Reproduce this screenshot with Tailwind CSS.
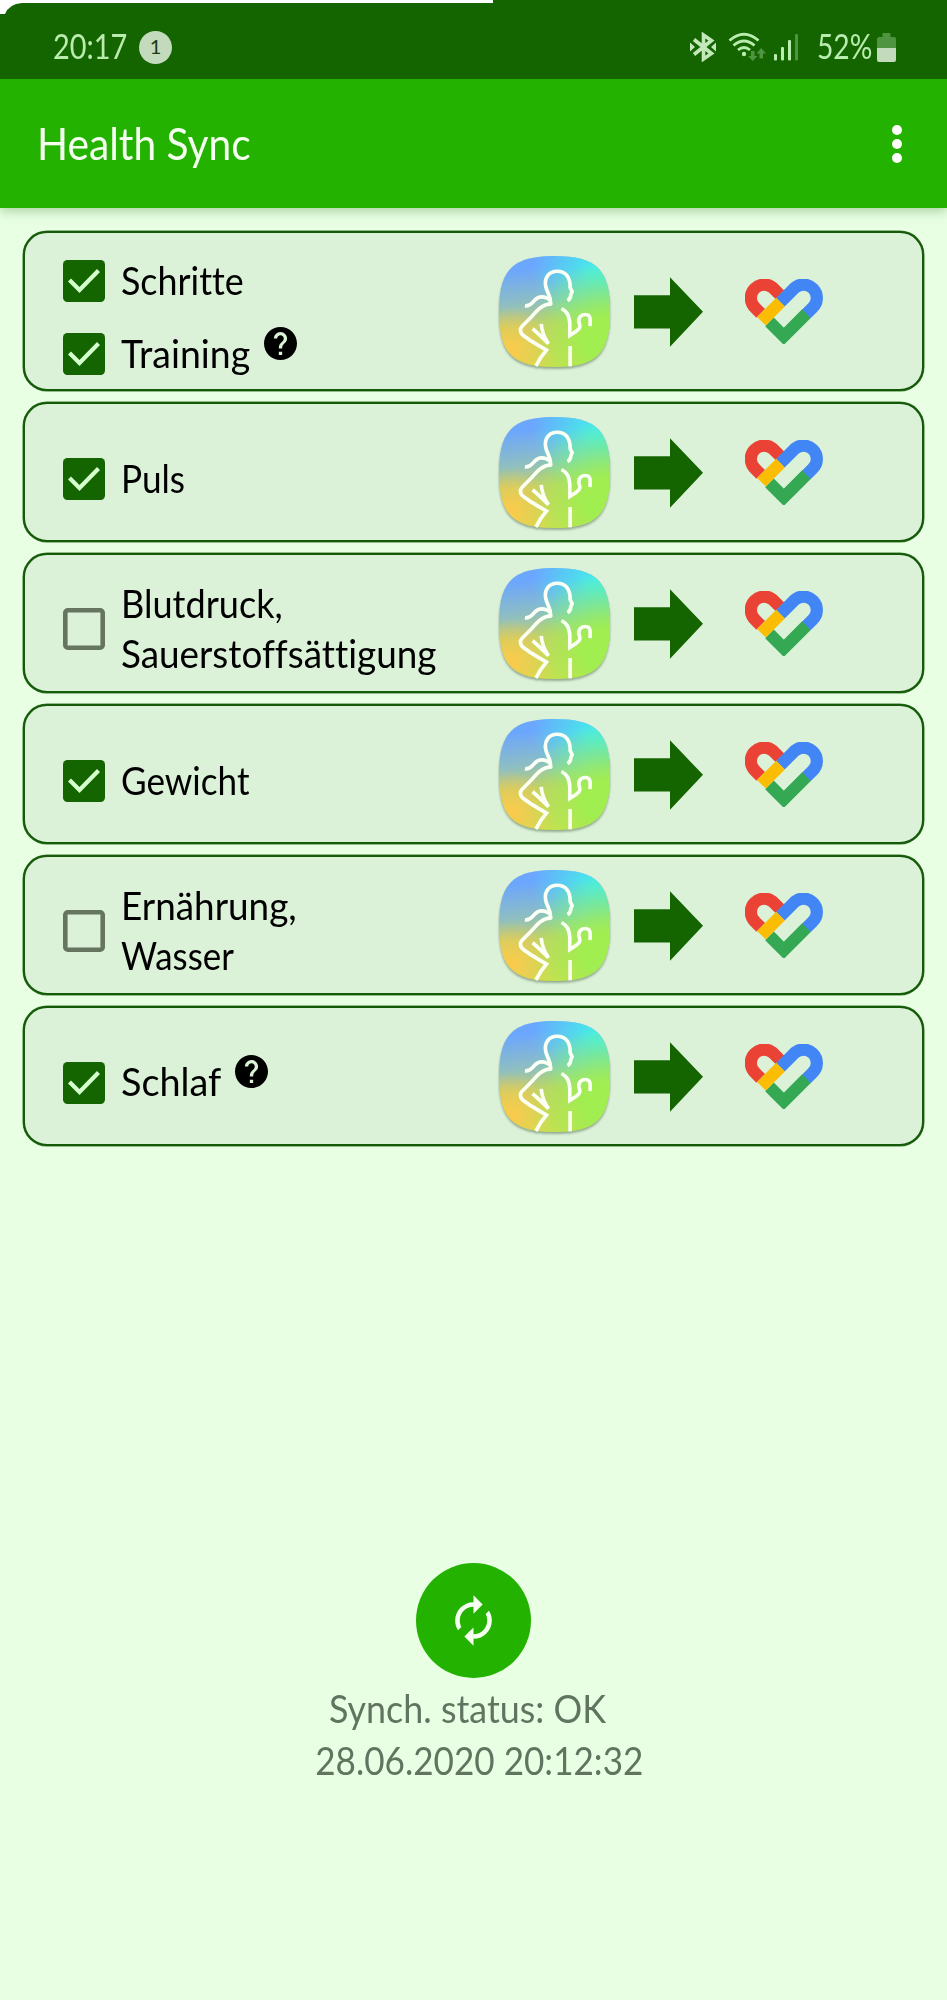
<!DOCTYPE html>
<html lang="de">

<head>
    <meta charset="UTF-8">
    <meta name="viewport" content="width=device-width, initial-scale=1.0">
    <title>Health Sync</title>
    <script src="https://cdn.jsdelivr.net/npm/@tailwindcss/browser@4"></script>
</head>

<body class="bg-[#e9ffe4] font-['Lato',sans-serif] text-[39px] leading-[50px] text-black [font-variant-ligatures:none]">

    <!-- Shared icons -->
    <svg class="absolute w-0 h-0" aria-hidden="true">
        <defs>
            <linearGradient id="gBase" x1="0.3" y1="0" x2="0.4" y2="1">
                <stop offset="0.1" stop-color="#6ba6ff" />
                <stop offset="0.42" stop-color="#8fbfc0" />
                <stop offset="0.62" stop-color="#c3ce6c" />
                <stop offset="1" stop-color="#d3dc50" />
            </linearGradient>
            <radialGradient id="gCyan" cx="0.9" cy="0.14" r="0.6">
                <stop offset="0.1" stop-color="#45ecea" />
                <stop offset="1" stop-color="#45ecea" stop-opacity="0" />
            </radialGradient>
            <radialGradient id="gLime" cx="0.95" cy="0.75" r="0.7">
                <stop offset="0.25" stop-color="#a0ee50" />
                <stop offset="1" stop-color="#a0ee50" stop-opacity="0" />
            </radialGradient>
            <radialGradient id="gGold" cx="0.1" cy="0.85" r="0.38">
                <stop offset="0.1" stop-color="#f8cb4c" />
                <stop offset="1" stop-color="#f8cb4c" stop-opacity="0" />
            </radialGradient>
        </defs>
        <symbol id="shealth" viewBox="57 77 334 334">
            <path fill="url(#gBase)" d="M224 77C350 77 391 118 391 244S350 411 224 411S57 370 57 244S98 77 224 77Z" />
            <path fill="url(#gCyan)" d="M224 77C350 77 391 118 391 244S350 411 224 411S57 370 57 244S98 77 224 77Z" />
            <path fill="url(#gLime)" d="M224 77C350 77 391 118 391 244S350 411 224 411S57 370 57 244S98 77 224 77Z" />
            <path fill="url(#gGold)" d="M224 77C350 77 391 118 391 244S350 411 224 411S57 370 57 244S98 77 224 77Z" />
            <g fill="none" stroke="#fbfff4" stroke-width="11">
                <path d="M263 211Q273 206 273 194L277 184L271 172C272 142 258 123 232 123C206 123 194 143 197 165C199 185 213 192 213 224" />
                <path d="M135 227C160 231 158 202 184 200C195 199 205 205 213 211" />
                <path d="M216 221C185 221 170 243 155 260L126 289Q117 300 126 312C140 326 172 344 200 360L183 382L168 408" />
                <path d="M245 235C262 244 268 255 270 280V316L290 303C303 294 302 287 297 275C296 260 307 252 318 253C333 254 332 266 331 288" />
                <path d="M184 281C186 305 195 325 206 341C190 325 175 310 158 296" />
                <path d="M271 348V409" />
            </g>
        </symbol>
        <symbol id="arrow" viewBox="42 141 207 209">
            <path fill="#146500" d="M42 195H150V141L249 245L150 350V295H42Z" />
        </symbol>
        <symbol id="gfit" viewBox="374 146 235 197">
            <g fill="none" stroke-width="37">
                <path stroke="#ea4335" d="M421 250.2L404.4 233.6A40.5 40.5 0 1 1 461.6 176.4L479 193.8" />
                <path stroke="#4285f4" d="M480.5 216.3L520.4 176.4A40.5 40.5 0 1 1 577.6 233.6L559 252.2" />
                <path stroke="#34a853" d="M447.5 276L491 319.5L559.5 251" />
                <path stroke="#fbbc04" d="M423 274L481 216" />
            </g>
        </symbol>
        <symbol id="checked" viewBox="0 0 42 42">
            <rect width="42" height="42" rx="4.5" fill="#146500" />
            <path d="M6.5 20L16.5 30L35.5 10.5" fill="none" stroke="#d5ffcc" stroke-width="4.2" />
        </symbol>
        <symbol id="unchecked" viewBox="0 0 42 42">
            <rect x="2.3" y="2.3" width="37.4" height="37.4" rx="2.5" fill="none" stroke="#65755f" stroke-width="4.6" />
        </symbol>
        <symbol id="help" viewBox="2 2 20 20">
            <path d="M12 2C6.48 2 2 6.48 2 12s4.48 10 10 10 10-4.48 10-10S17.52 2 12 2zm1 17h-2v-2h2v2zm2.07-7.75l-.9.92C13.45 12.9 13 13.5 13 15h-2v-.5c0-1.1.45-2.1 1.17-2.83l1.24-1.26c.37-.36.59-.86.59-1.41 0-1.1-.9-2-2-2s-2 .9-2 2H8c0-2.21 1.79-4 4-4s4 1.79 4 4c0 .88-.36 1.68-.93 2.25z" />
        </symbol>
    </svg>

    <!-- Status bar -->
    <div class="relative h-[79px] bg-[#146500] pl-[53px] pr-[51px] pt-[15px] flex items-center justify-between text-[34px] text-[#b9ecae]">
        <svg class="absolute left-0 top-0" width="493" height="14" viewBox="0 0 493 14">
            <path fill="#fff" d="M0 0H493V3H22Q9 4 5 14H0Z" />
        </svg>
        <div class="flex items-center">
            <div class="w-[86px] pb-[2px]"><span class="inline-block origin-left whitespace-nowrap scale-x-[0.85]">20:17</span></div>
            <span class="size-[33px] rounded-full bg-[#c3dabd] text-[#1c3a14] text-[20px] leading-[31px] text-center">1</span>
        </div>
        <div class="flex items-center">
            <svg width="26" height="30" viewBox="0 0 26 30" fill="none" stroke="#c3e8ba" stroke-width="3.6">
                <path d="M4 7.5L21.5 21.5L13.5 27V3L21.5 8.5L4 22.5" />
                <path d="M0 10.5L5 15L0 19.5ZM26 10.5L21 15L26 19.5Z" fill="#c3e8ba" stroke="none" />
            </svg>
            <svg class="ml-[12px]" width="38" height="30" viewBox="0 0 38 30" fill="none" stroke="#b9ecae" stroke-width="2.8">
                <path d="M1.5 8.5Q16 -4 30.5 8.5M5.5 13.5Q16 4.5 26.5 13.5M10 18Q16 13 22 18" />
                <circle cx="16" cy="22" r="2.2" fill="#b9ecae" stroke="none" />
                <g fill="#4f9440" stroke="none">
                    <path d="M23 19h3.5v5h3L24.7 29L20 24h3Z" />
                    <path d="M31.5 26.5h3.5v-5h3L33.2 16L28.5 21.5h3Z" />
                </g>
            </svg>
            <svg class="ml-[8px]" width="25" height="28" viewBox="0 0 25 28" fill="#b9ecae">
                <rect x="0" y="21" width="3" height="6.5" rx="1" />
                <rect x="7" y="14" width="3" height="13.5" rx="1" />
                <rect x="14" y="7" width="3" height="20.5" rx="1" />
                <rect x="21" y="1" width="3" height="26.5" rx="1" fill="#4f9440" />
            </svg>
            <div class="ml-[18px] w-[60px] pb-[2px]"><span class="inline-block origin-left whitespace-nowrap scale-x-[0.83]">52%</span></div>
            <svg width="19" height="29" viewBox="0 0 19 29">
                <path fill="#4f9440" d="M5.5 0H13.5V4H17Q19 4 19 6V16H0V6Q0 4 2 4H5.5Z" />
                <path fill="#c3dabd" d="M0 15H19V27Q19 29 17 29H2Q0 29 0 27Z" />
            </svg>
        </div>
    </div>

    <!-- App bar -->
    <header class="h-[129px] bg-[#24b200] pl-[37px] pr-[45px] flex items-center justify-between shadow-[0_2px_12px_rgba(20,101,0,0.35)]">
        <h1 class="text-[45px] leading-[56px] text-[#f4fff0] pb-[2px]"><span class="inline-block origin-left whitespace-nowrap scale-x-[0.905]">Health Sync</span></h1>
        <button class="flex flex-col gap-[4px]" aria-label="Menü">
            <span class="size-[10px] rounded-full bg-white"></span>
            <span class="size-[10px] rounded-full bg-white"></span>
            <span class="size-[10px] rounded-full bg-white"></span>
        </button>
    </header>

    <main class="px-[23px] pt-[23px] flex flex-col gap-[11px]">

        <section class="h-[160px] rounded-[24px] border-2 border-[#145a08] shadow-[0_0_0_0.5px_#3c7a32] bg-[#dbf1d8] flex items-center">
            <div class="w-[474px] pl-[38px] pt-[13px] flex flex-col gap-[23px]">
                <div class="h-[50px] flex items-center">
                    <svg class="size-[42px] mr-[16px]"><use href="#checked" /></svg>
                    <div class="pb-[3px]"><span class="inline-block origin-left whitespace-nowrap scale-x-[0.92]">Schritte</span></div>
                </div>
                <div class="h-[50px] flex items-center">
                    <svg class="size-[42px] mr-[16px]"><use href="#checked" /></svg>
                    <div class="w-[143px] pb-[3px]"><span class="inline-block origin-left whitespace-nowrap scale-x-[0.96]">Training</span></div>
                    <svg class="size-[33px] mb-[22px]"><use href="#help" /></svg>
                </div>
            </div>
            <svg class="size-[111px] drop-shadow-[0_2px_1px_rgba(60,90,60,0.45)]"><use href="#shealth" /></svg>
            <svg class="w-[69px] h-[70px] ml-[24px] mt-[1px]"><use href="#arrow" /></svg>
            <svg class="w-[78px] h-[65px] ml-[42px]"><use href="#gfit" /></svg>
        </section>

        <section class="h-[140px] rounded-[24px] border-2 border-[#145a08] shadow-[0_0_0_0.5px_#3c7a32] bg-[#dbf1d8] flex items-center">
            <div class="w-[474px] pl-[38px] pt-[14px] flex items-center">
                <svg class="size-[42px] mr-[16px]"><use href="#checked" /></svg>
                <div class="pb-[3px]"><span class="inline-block origin-left whitespace-nowrap scale-x-[0.9]">Puls</span></div>
            </div>
            <svg class="size-[111px] drop-shadow-[0_2px_1px_rgba(60,90,60,0.45)]"><use href="#shealth" /></svg>
            <svg class="w-[69px] h-[70px] ml-[24px] mt-[1px]"><use href="#arrow" /></svg>
            <svg class="w-[78px] h-[65px] ml-[42px]"><use href="#gfit" /></svg>
        </section>

        <section class="h-[140px] rounded-[24px] border-2 border-[#145a08] shadow-[0_0_0_0.5px_#3c7a32] bg-[#dbf1d8] flex items-center">
            <div class="w-[474px] pl-[38px] pt-[12px] flex items-center">
                <svg class="size-[42px] mr-[16px]"><use href="#unchecked" /></svg>
                <div class="pb-[3px] flex flex-col items-start">
                    <span class="inline-block origin-left whitespace-nowrap scale-x-[0.925]">Blutdruck,</span>
                    <span class="inline-block origin-left whitespace-nowrap scale-x-[0.945]">Sauerstoffsättigung</span>
                </div>
            </div>
            <svg class="size-[111px] drop-shadow-[0_2px_1px_rgba(60,90,60,0.45)]"><use href="#shealth" /></svg>
            <svg class="w-[69px] h-[70px] ml-[24px] mt-[1px]"><use href="#arrow" /></svg>
            <svg class="w-[78px] h-[65px] ml-[42px]"><use href="#gfit" /></svg>
        </section>

        <section class="h-[140px] rounded-[24px] border-2 border-[#145a08] shadow-[0_0_0_0.5px_#3c7a32] bg-[#dbf1d8] flex items-center">
            <div class="w-[474px] pl-[38px] pt-[14px] flex items-center">
                <svg class="size-[42px] mr-[16px]"><use href="#checked" /></svg>
                <div class="pb-[3px]"><span class="inline-block origin-left whitespace-nowrap scale-x-[0.9]">Gewicht</span></div>
            </div>
            <svg class="size-[111px] drop-shadow-[0_2px_1px_rgba(60,90,60,0.45)]"><use href="#shealth" /></svg>
            <svg class="w-[69px] h-[70px] ml-[24px] mt-[1px]"><use href="#arrow" /></svg>
            <svg class="w-[78px] h-[65px] ml-[42px]"><use href="#gfit" /></svg>
        </section>

        <section class="h-[140px] rounded-[24px] border-2 border-[#145a08] shadow-[0_0_0_0.5px_#3c7a32] bg-[#dbf1d8] flex items-center">
            <div class="w-[474px] pl-[38px] pt-[12px] flex items-center">
                <svg class="size-[42px] mr-[16px]"><use href="#unchecked" /></svg>
                <div class="pb-[3px] flex flex-col items-start">
                    <span class="inline-block origin-left whitespace-nowrap scale-x-[0.945]">Ernährung,</span>
                    <span class="inline-block origin-left whitespace-nowrap scale-x-[0.895]">Wasser</span>
                </div>
            </div>
            <svg class="size-[111px] drop-shadow-[0_2px_1px_rgba(60,90,60,0.45)]"><use href="#shealth" /></svg>
            <svg class="w-[69px] h-[70px] ml-[24px] mt-[1px]"><use href="#arrow" /></svg>
            <svg class="w-[78px] h-[65px] ml-[42px]"><use href="#gfit" /></svg>
        </section>

        <section class="h-[140px] rounded-[24px] border-2 border-[#145a08] shadow-[0_0_0_0.5px_#3c7a32] bg-[#dbf1d8] flex items-center">
            <div class="w-[474px] pl-[38px] pt-[13px] flex items-center">
                <svg class="size-[42px] mr-[16px]"><use href="#checked" /></svg>
                <div class="w-[114px] pb-[3px]"><span class="inline-block origin-left whitespace-nowrap scale-x-[0.97]">Schlaf</span></div>
                <svg class="size-[33px] mb-[23px]"><use href="#help" /></svg>
            </div>
            <svg class="size-[111px] drop-shadow-[0_2px_1px_rgba(60,90,60,0.45)]"><use href="#shealth" /></svg>
            <svg class="w-[69px] h-[70px] ml-[24px] mt-[1px]"><use href="#arrow" /></svg>
            <svg class="w-[78px] h-[65px] ml-[42px]"><use href="#gfit" /></svg>
        </section>
    </main>

    <!-- Sync button and status -->
    <footer class="mt-[417px] flex flex-col items-center leading-[52px] text-[#61745f]">
        <button class="size-[115px] rounded-full bg-[#24b200] flex items-center justify-center" aria-label="Sync">
            <svg class="size-[55px]" viewBox="0 0 24 24" fill="#f4fff0">
                <path d="M12 6v3l4-4-4-4v3c-4.42 0-8 3.58-8 8 0 1.57.46 3.03 1.24 4.26L6.7 14.8c-.45-.83-.7-1.79-.7-2.8 0-3.31 2.69-6 6-6zm6.76 1.74L17.3 9.2c.44.84.7 1.79.7 2.8 0 3.31-2.69 6-6 6v-3l-4 4 4 4v-3c4.42 0 8-3.58 8-8 0-1.57-.46-3.03-1.24-4.26z" />
            </svg>
        </button>
        <p class="mt-[4px] pr-[12px]"><span class="inline-block whitespace-nowrap scale-x-[0.92]">Synch. status: OK</span></p>
        <p class="pl-[11px]"><span class="inline-block whitespace-nowrap scale-x-[0.9]">28.06.2020 20:12:32</span></p>
    </footer>
</body>

</html>
